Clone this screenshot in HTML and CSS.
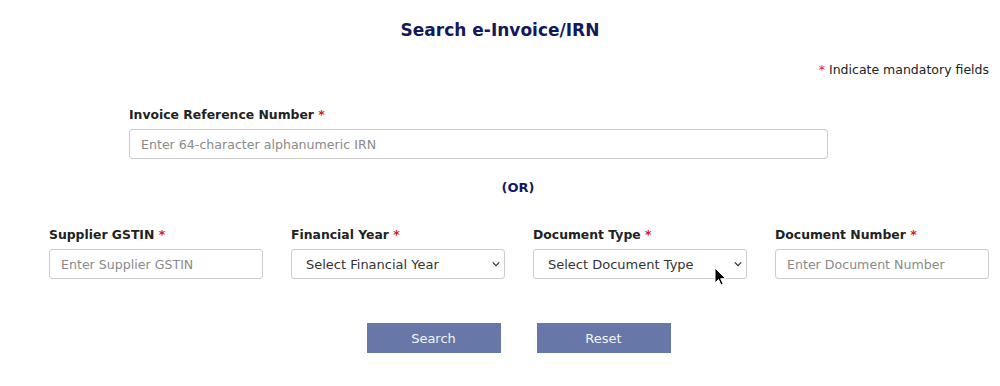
FILE: index.html
```html
<!DOCTYPE html>
<html>
<head>
<meta charset="utf-8">
<link rel="stylesheet" href="styles.css">
</head>
<body>
<div class="page">
  <h1 class="title">Search e-Invoice/IRN</h1>
  <div class="mandatory"><span class="req">*</span> Indicate mandatory fields</div>
  <div class="irn">
    <label class="lbl">Invoice Reference Number <span class="req">*</span></label>
    <input class="field" type="text" placeholder="Enter 64-character alphanumeric IRN">
  </div>
  <div class="or">(OR)</div>
  <div class="grid">
    <div class="col">
      <label class="lbl">Supplier GSTIN <span class="req">*</span></label>
      <input class="field" type="text" placeholder="Enter Supplier GSTIN">
    </div>
    <div class="col">
      <label class="lbl">Financial Year <span class="req">*</span></label>
      <div class="select">Select Financial Year<svg class="chev" viewBox="0 0 10 6"><path d="M1 1l4 4 4-4" fill="none" stroke="#333" stroke-width="1.6"/></svg></div>
    </div>
    <div class="col">
      <label class="lbl">Document Type <span class="req">*</span></label>
      <div class="select">Select Document Type<svg class="chev" viewBox="0 0 10 6"><path d="M1 1l4 4 4-4" fill="none" stroke="#333" stroke-width="1.6"/></svg>
        <svg class="cursor" viewBox="0 0 12 19"><path d="M1 1v15l3.5-3.5 2.5 5.5 2.2-1-2.5-5.3h5z" fill="#000" stroke="#fff" stroke-width="1"/></svg>
      </div>
    </div>
    <div class="col">
      <label class="lbl">Document Number <span class="req">*</span></label>
      <input class="field" type="text" placeholder="Enter Document Number">
    </div>
  </div>
  <div class="actions">
    <button class="btn">Search</button>
    <button class="btn">Reset</button>
  </div>
</div>
</body>
</html>
```

FILE: styles.css
```css
html, body { margin: 0; padding: 0; background: #fff; }
body { font-family: "DejaVu Sans", Verdana, sans-serif; color: #222; }
.page { width: 1000px; height: 386px; position: relative; box-sizing: border-box; padding-top: 20px; }
.title { margin: 0; text-align: center; font-size: 17px; font-weight: bold; color: #14195a; line-height: 20px; padding-left: 0; }
.mandatory { text-align: right; padding-right: 11px; font-size: 12.5px; margin-top: 21px; line-height: 18px; color: #222; }
.req { color: #e0141e; }
.irn { margin-left: 129px; width: 699px; margin-top: 27px; }
.lbl { display: block; font-size: 12.4px; font-weight: bold; line-height: 18px; color: #222; margin-bottom: 5px; }
.field, .select { display: flex; align-items: center; box-sizing: border-box; width: 100%; height: 30px; border: 1px solid #ccc; border-radius: 3px; font-family: inherit; font-size: 12.6px; padding: 0 11px; color: #333; background: #fff; outline: none; }
.field::placeholder { color: #8a8a8a; }
.or { text-align: center; font-size: 13px; font-weight: bold; color: #14195a; margin-top: 20px; line-height: 18px; padding-left: 36px; }
.grid { display: grid; grid-template-columns: repeat(4, 214px); column-gap: 28px; margin-left: 49px; margin-top: 29px; }
.select { position: relative; padding-left: 14px; justify-content: space-between; padding-right: 4px; font-size: 13px; }
.chev { width: 8px; height: 6px; }
.cursor { position: absolute; left: 180px; top: 17px; width: 12px; height: 19px; }
.actions { display: flex; justify-content: center; gap: 36px; margin-top: 44px; padding-left: 37px; }
.btn { width: 134px; height: 30px; border: none; background: #6677a8; color: #f2f4fa; font-family: inherit; font-size: 13px; padding: 0; }
```
